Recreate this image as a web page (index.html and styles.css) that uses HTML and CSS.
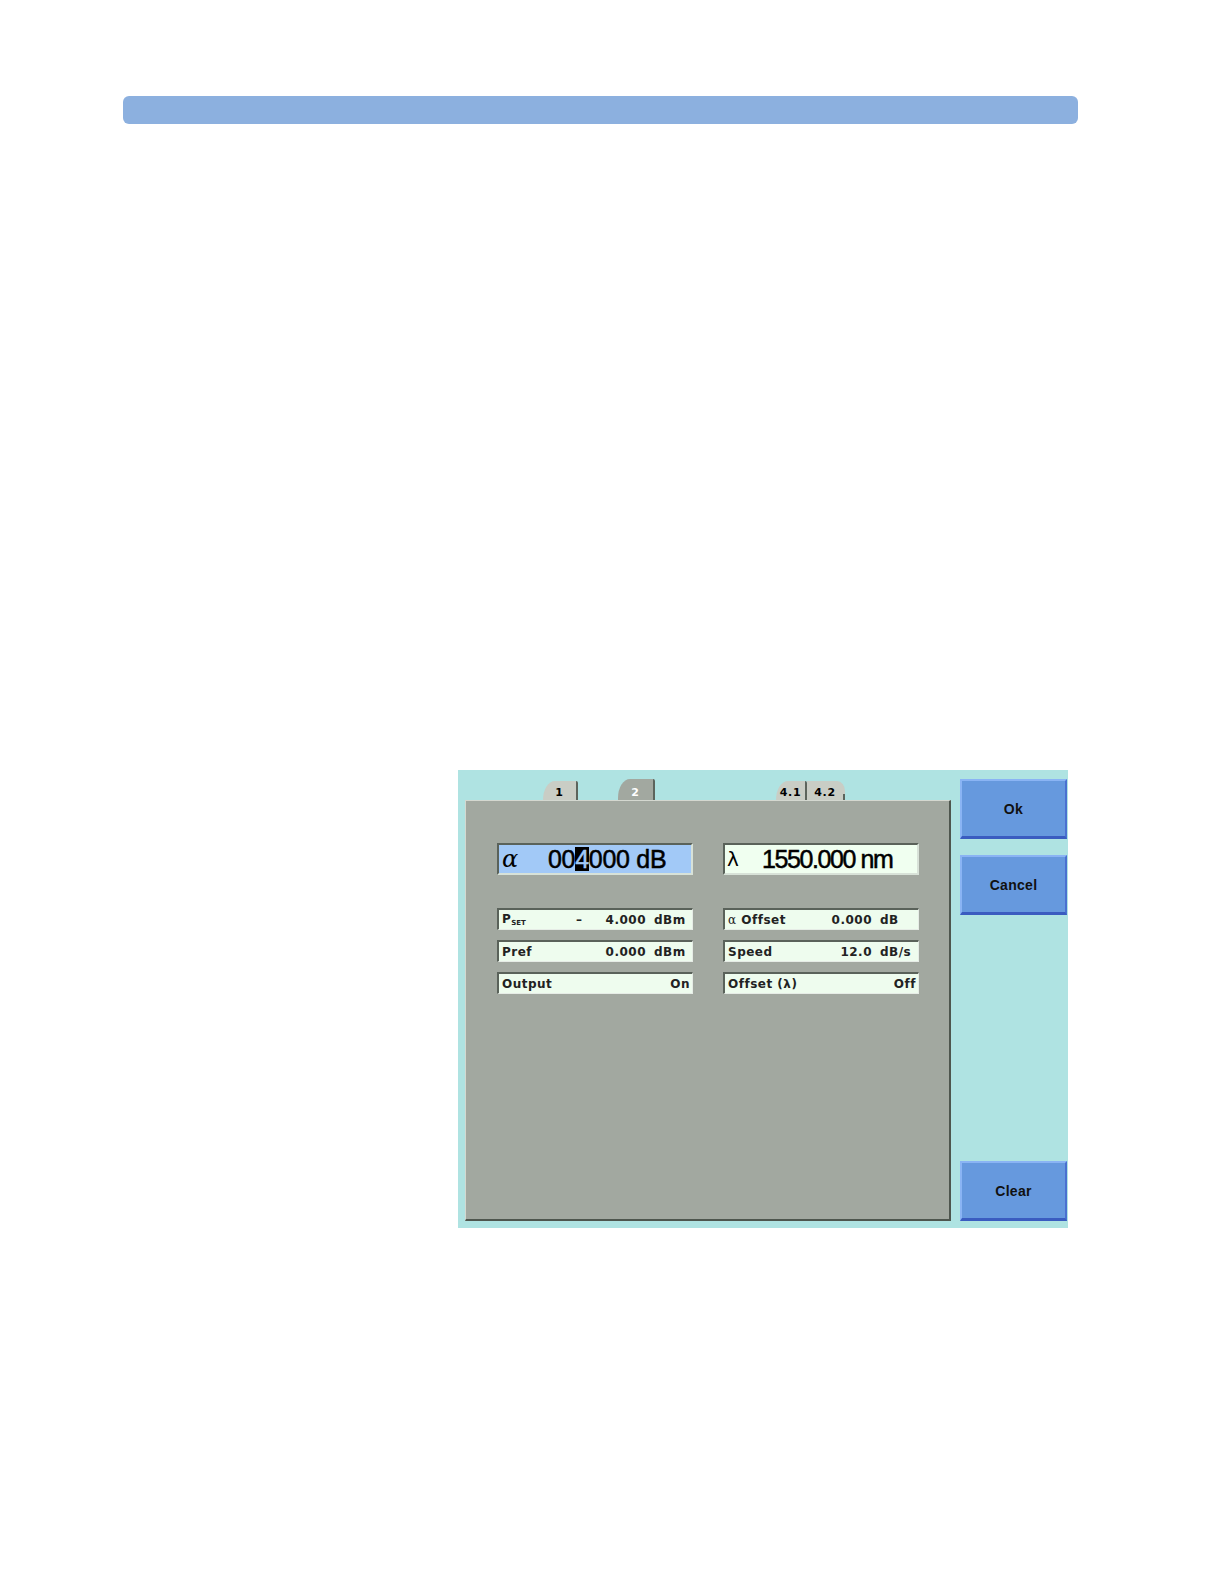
FILE: index.html
```html
<!DOCTYPE html>
<html>
<head>
<meta charset="utf-8">
<link rel="stylesheet" href="styles.css">
</head>
<body>
<div class="page">
  <div class="header"></div>
  <div class="screen">
    <div class="left">
      <div class="tabs">
        <div class="tab t1"><span>1</span></div>
        <div class="tab t2 sel"><span>2</span></div>
        <div class="tab t41"><span>4.1</span></div>
        <div class="tab t42"><span>4.2</span></div>
      </div>
      <div class="panel">
        <div class="bigrow">
          <div class="big alpha"><span class="sym">&alpha;</span><span class="bval">00<span class="cur">4</span>000 dB</span></div>
          <div class="big lambda"><span class="sym">&lambda;</span><span class="bval lv">1550.000 nm</span></div>
        </div>
        <div class="smallgrid">
          <div class="sf"><span class="lbl">P<sub>SET</sub></span><span class="dash">&ndash;</span><span class="val">4.000</span><span class="unit">dBm</span></div>
          <div class="sf"><span class="lbl"><i class="ga">&alpha;</i> Offset</span><span class="val">0.000</span><span class="unit">dB</span></div>
          <div class="sf"><span class="lbl">Pref</span><span class="val">0.000</span><span class="unit">dBm</span></div>
          <div class="sf"><span class="lbl">Speed</span><span class="val">12.0</span><span class="unit">dB/s</span></div>
          <div class="sf"><span class="lbl">Output</span><span class="val end">On</span></div>
          <div class="sf"><span class="lbl">Offset (&lambda;)</span><span class="val end">Off</span></div>
        </div>
      </div>
    </div>
    <div class="buttons">
      <div class="btn">Ok</div>
      <div class="btn">Cancel</div>
      <div class="btn clear">Clear</div>
    </div>
  </div>
</div>
</body>
</html>
```
FILE: styles.css
```css
html, body {
  margin: 0;
  padding: 0;
  background: #ffffff;
}
.page {
  padding-top: 96px;
  font-family: "DejaVu Sans", sans-serif;
}
.header {
  margin-left: 123px;
  width: 955px;
  height: 28px;
  background: #8cb0df;
  border-radius: 6px;
}
.screen {
  margin-top: 646px;
  margin-left: 458px;
  width: 610px;
  height: 458px;
  box-sizing: border-box;
  background: #afe3e2;
  padding: 9px 1px 7px 7px;
  display: flex;
  gap: 9px;
}
.left {
  width: 486px;
  display: flex;
  flex-direction: column;
}
.tabs {
  height: 21px;
  display: flex;
  align-items: flex-end;
}
.tab {
  height: 19px;
  box-sizing: border-box;
  background: #c9cdc5;
  border-top-left-radius: 12px 19px;
  border-top-right-radius: 2px;
  border-right: 2px solid #5c645c;
  font-weight: bold;
  font-size: 11px;
  color: #000;
  display: flex;
  align-items: flex-end;
  justify-content: center;
  padding-bottom: 1px;
  letter-spacing: 0.6px;
}
.t1 { margin-left: 78px; width: 35px; }
.t2 { margin-left: 40px; width: 37px; height: 21px; background: #a2a8a0; color: #ffffff; }
.t41 { margin-left: 121px; width: 31px; }
.t42 {
  width: 38px;
  border-right: none;
  border-top-left-radius: 0;
  border-top-right-radius: 8px 10px;
  background: linear-gradient(to bottom, #c9cdc5 13px, transparent 13px),
              linear-gradient(to right, #c9cdc5 36px, #5c645c 36px);
}
.t42 span { margin-right: 2px; }
.panel {
  flex: 1;
  background: #a2a8a0;
  border-top: 1px solid #d4d8d0;
  border-left: 1px solid #d4d8d0;
  border-right: 2px solid #4e564e;
  border-bottom: 2px solid #4e564e;
  padding: 42px 30px 0 31px;
}
.bigrow {
  display: flex;
  gap: 30px;
}
.big {
  width: 196px;
  height: 32px;
  box-sizing: border-box;
  border-top: 2px solid #5a625a;
  border-left: 2px solid #5a625a;
  border-right: 2px solid #d8e2d8;
  border-bottom: 2px solid #d8e2d8;
  display: flex;
  align-items: center;
  font-family: "Liberation Sans", sans-serif;
  color: #000;
}
.alpha { background: #a2c9f7; }
.lambda { background: #f0fff0; }
.sym {
  font-size: 25px;
  width: 46px;
  padding-left: 3px;
  font-family: "DejaVu Serif", serif;
}
.alpha .sym { font-style: italic; font-size: 24px; }
.lambda .sym { width: 35px; font-family: "DejaVu Sans", sans-serif; font-size: 20px; padding-left: 2px; }
.bval {
  font-size: 25px;
  letter-spacing: -0.3px;
  -webkit-text-stroke: 0.5px #000;
}
.lv { letter-spacing: -1.4px; }
.cur {
  background: #000;
  color: #a2c9f7;
  -webkit-text-stroke: 0.5px #a2c9f7;
  display: inline-block;
  line-height: 24px;
}
.smallgrid {
  margin-top: 33px;
  display: grid;
  grid-template-columns: 196px 196px;
  column-gap: 30px;
  row-gap: 10px;
}
.sf {
  height: 22px;
  box-sizing: border-box;
  background: #eefcee;
  border-top: 2px solid #5a625a;
  border-left: 2px solid #5a625a;
  border-bottom: 1px solid #e6ece6;
  border-right: 1px solid #e6ece6;
  display: flex;
  align-items: center;
  padding-left: 3px;
  font-size: 12px;
  font-weight: bold;
  color: #222;
  letter-spacing: 0.5px;
}
.lbl { white-space: nowrap; }
.lbl sub { font-size: 7px; vertical-align: -2px; letter-spacing: 0; }
.ga { font-style: normal; font-weight: normal; font-family: "DejaVu Serif", serif; }
.dash { margin-left: 50px; }
.val {
  flex: 1;
  text-align: right;
}
.val.end { padding-right: 2px; }
.unit {
  width: 46px;
  padding-left: 8px;
  box-sizing: border-box;
}
.buttons {
  width: 107px;
  display: flex;
  flex-direction: column;
  gap: 16px;
}
.btn {
  height: 60px;
  box-sizing: border-box;
  background: #6699de;
  border-top: 2px solid #8ab4f4;
  border-left: 2px solid #8ab4f4;
  border-bottom: 3px solid #3a5cc0;
  border-right: 2px solid #4a70d0;
  display: flex;
  align-items: center;
  justify-content: center;
  font-family: "Liberation Sans", sans-serif;
  font-weight: bold;
  font-size: 14px;
  color: #111;
  letter-spacing: 0.3px;
}
.clear { margin-top: auto; }
```
